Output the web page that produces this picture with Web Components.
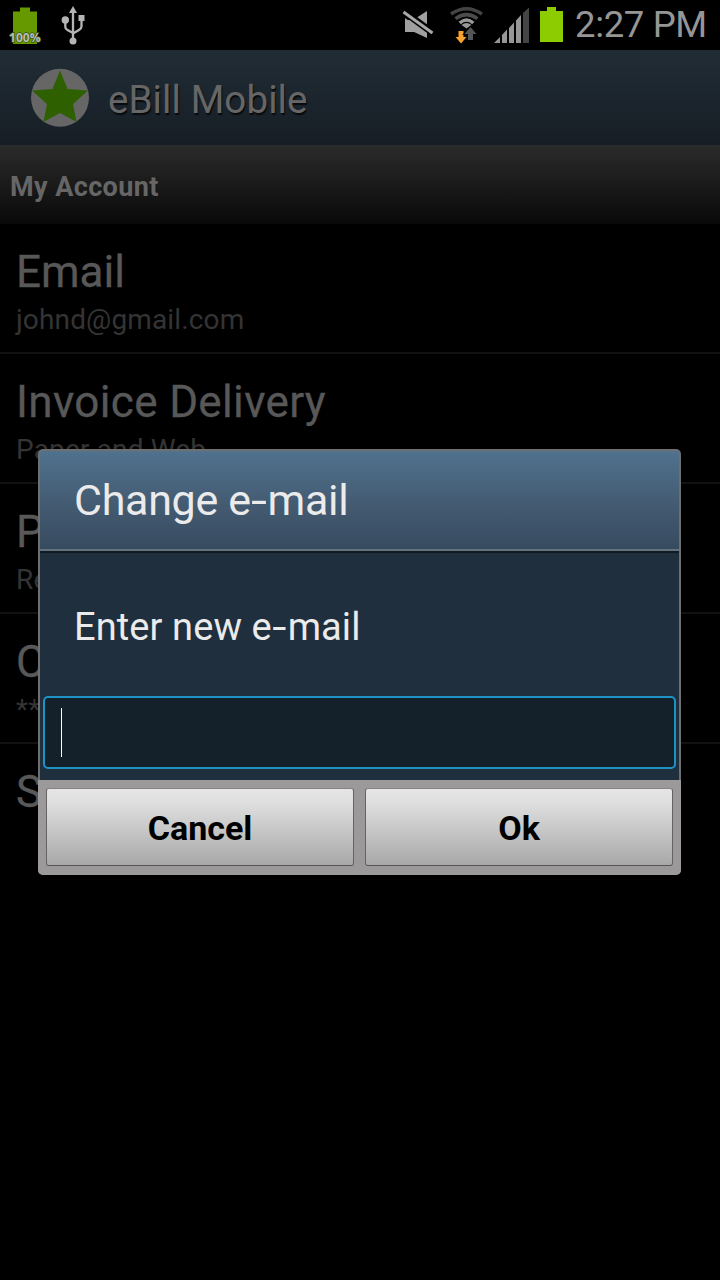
<!DOCTYPE html>
<html lang="en">
<head>
<meta charset="utf-8">
<title>eBill Mobile</title>
<style>
html,body{margin:0;background:#000}
body{width:720px;height:1280px;overflow:hidden;font-family:Roboto,"Noto Sans",sans-serif}
</style>
</head>
<body>
<ebill-screen></ebill-screen>
<script>
function define(name, html) {
  const template = document.createElement('template');
  template.innerHTML = html;
  customElements.define(name, class extends HTMLElement {
    constructor() {
      super();
      this.attachShadow({ mode: 'open' }).appendChild(template.content.cloneNode(true));
    }
  });
}

define('status-bar', `
<style>
:host{display:flex;justify-content:space-between;height:50px;background:#000;color:#969696}
svg{display:block;flex:none}
.right{display:flex}
.time{width:145px;font-size:36.500px;line-height:50px;white-space:nowrap;box-sizing:border-box;letter-spacing:-.35px}
.pct{font:bold 12.5px "Open Sans","Noto Sans",sans-serif;fill:#b9bdb4;stroke:#39520e;stroke-width:1.5px;paint-order:stroke}
</style>
<svg width="120" height="50" viewBox="0 0 120 50">
  <path fill="#669900" d="M20 7.500H30V11.500H37V44H13V11.500H20Z"/>
  <text class="pct" x="9" y="42" textLength="31.500" lengthAdjust="spacingAndGlyphs">100%</text>
  <g fill="#b5b5b5">
    <path d="M73 6L77 13H69Z"/><circle cx="65.300" cy="20" r="3.700"/><rect x="78.500" y="15" width="6" height="6"/><circle cx="73" cy="41" r="3.500"/>
  </g>
  <path fill="none" stroke="#b5b5b5" stroke-width="2.300" d="M73 10V40M65.300 21V27Q65.300 29 67.500 30L73 33M81.500 19V26.500Q81.500 28.500 79 30L73 33.500"/>
</svg>
<div class="right">
  <svg width="185" height="50" viewBox="390 0 185 50">
    <path fill="#a0a0a0" d="M405 20H413L427 11V38L413 31.500H405Z"/>
    <path stroke="#000" stroke-width="7" d="M403 11L433 33"/>
    <path stroke="#a8a8a8" stroke-width="3" d="M403.500 12L432.500 33"/>
    <path fill="#a0a0a0" d="M405 18L424 32H405Z"/>
    <g fill="none" stroke-width="3.500">
      <path stroke="#444" d="M451 14Q466.500 3.500 482 14"/>
      <path stroke="#4c4c4c" d="M455.500 18.700Q466.500 10.500 477.500 18.700"/>
      <path stroke="#999" d="M459.700 23Q466.500 17 473.300 23"/>
    </g>
    <path fill="#999" d="M461.500 25Q466.500 21 471.500 25L466.500 28.500Z"/>
    <path fill="#f9a12e" stroke="#000" stroke-width="1" paint-order="stroke" d="M458.500 31H463.500V37H466.500L461 43.500L455.500 37H458.500Z"/>
    <path fill="#555" stroke="#000" stroke-width="2" paint-order="stroke" d="M468 40V34H464.500L470.500 27L476.500 34H473V40Z"/>
    <g fill="#969696"><path d="M494 43L500 37V43ZM502 35L507 29.500V43H502ZM509 28L514 22.500V43H509ZM516 20.500L521 15V43H516Z"/><path fill="#444" d="M523 13L529 7.500V43H523Z"/></g>
    <path fill="#8dcc00" d="M547 7H556V11H563V42H540V11H547Z"/>
  </svg>
  <div class="time">2:27 PM</div>
</div>`);

define('app-header', `
<style>
:host{display:flex;height:95px;box-sizing:border-box;padding:0 0 0 30px;gap:18px;align-items:center;background:linear-gradient(#212d35,#161d25);color:#666;font-size:38.5px}
svg{display:block}
span{line-height:50px;padding-top:4px;text-shadow:1px 2px 1px #080b0e;letter-spacing:.1px}
</style>
<svg width="60" height="60" viewBox="0 0 60 60"><circle cx="30" cy="29.800" r="29" fill="#666"/>
<path fill="#2f6000" d="M30 2.500L37.500 21L58 22.500L43 36L46.500 54L30 45L13.500 54L17 36L2 22.500L22.500 21Z"/></svg>
<span><slot></slot></span>`);

define('section-header', `
<style>
:host{display:block;height:79px;box-sizing:border-box;padding:22px 0 0 10px;background:linear-gradient(#2b2b2b,#090909);color:#666;font-size:27px;font-weight:700;line-height:40px;letter-spacing:.4px}
</style><slot></slot>`);

define('account-row', `
<style>
:host{display:block;height:130px;box-sizing:border-box;padding:22px 16px 0;border-bottom:2px solid #111}
:host([last]){border:0}
.title{font-size:44px;line-height:52px;height:52px;color:#585858;letter-spacing:var(--title-spacing,0);-webkit-text-stroke:.3px}
.sub{font-size:28px;line-height:34px;height:34px;margin-top:5px;color:#343434;letter-spacing:.15px}
</style>
<div class="title"><slot></slot></div><div class="sub"><slot name="sub"></slot></div>`);

define('dialog-button', `
<style>
:host{display:block;flex:1;height:78px;box-sizing:border-box;border:1px solid #656366;border-top-color:#858386;border-bottom-color:#555;border-radius:3px;background:linear-gradient(#e5e5e5,#dfdfdf 18%,#a8a8a8);color:#000;font-size:34px;font-weight:700;line-height:78px;text-align:center}
</style><slot></slot>`);

define('text-entry', `
<style>
:host{display:flex;align-items:center;height:73px;box-sizing:border-box;border:2px solid #1c93c3;border-radius:5px;background:#15212a;padding-left:16px}
i{display:block;width:1px;height:49px;background:#fff}
</style><i></i>`);

define('prompt-dialog', `
<style>
:host{display:flex;flex-direction:column;width:643px;height:426px;box-sizing:border-box;border-radius:5px;overflow:hidden;background:#706f70;color:#ebebeb}
header{height:98px;margin:2px 2px 0;box-sizing:border-box;padding:23px 0 0 34px;border-radius:3px 3px 0 0;background:linear-gradient(#50728e,#42596f 60%,#374b60);font-size:43px;line-height:52px;letter-spacing:-.3px}
.rule{height:2px;margin:0 2px;background:#63727d;border-bottom:2px solid #101a23}
main{flex:1;margin:0 2px;box-sizing:border-box;padding:48px 3px 0;background:#1f2f3d}
.label{font-size:38px;line-height:52px;height:52px;padding-left:31px;margin-bottom:43px;letter-spacing:.1px}
footer{height:95px;box-sizing:border-box;padding:8px 8px 0;display:flex;gap:11px;background:#9c999b}
</style>
<header><slot name="title"></slot></header><div class="rule"></div>
<main><div class="label"><slot name="label"></slot></div><text-entry></text-entry></main>
<footer><slot name="actions"></slot></footer>`);

define('ebill-screen', `
<style>
:host{display:block;position:relative;width:720px;height:1280px;background:#000;overflow:hidden}
prompt-dialog{position:absolute;left:38px;top:449px}
.wide{--title-spacing:.35px}
.hyphen{display:inline-block;transform:scaleX(1.35);margin:0 2.6px}
</style>
<status-bar></status-bar>
<app-header>eBill Mobile</app-header>
<section-header>My Account</section-header>
<account-row>Email<span slot="sub">johnd@gmail.com</span></account-row>
<account-row class="wide">Invoice Delivery<span slot="sub">Paper and Web</span></account-row>
<account-row>P<span slot="sub">Re</span></account-row>
<account-row>C<span slot="sub">**</span></account-row>
<account-row last>S</account-row>
<prompt-dialog>
  <span slot="title">Change e<span class="hyphen">-</span>mail</span>
  <span slot="label">Enter new e<span class="hyphen">-</span>mail</span>
  <dialog-button slot="actions">Cancel</dialog-button>
  <dialog-button slot="actions">Ok</dialog-button>
</prompt-dialog>`);
</script>
</body>
</html>
